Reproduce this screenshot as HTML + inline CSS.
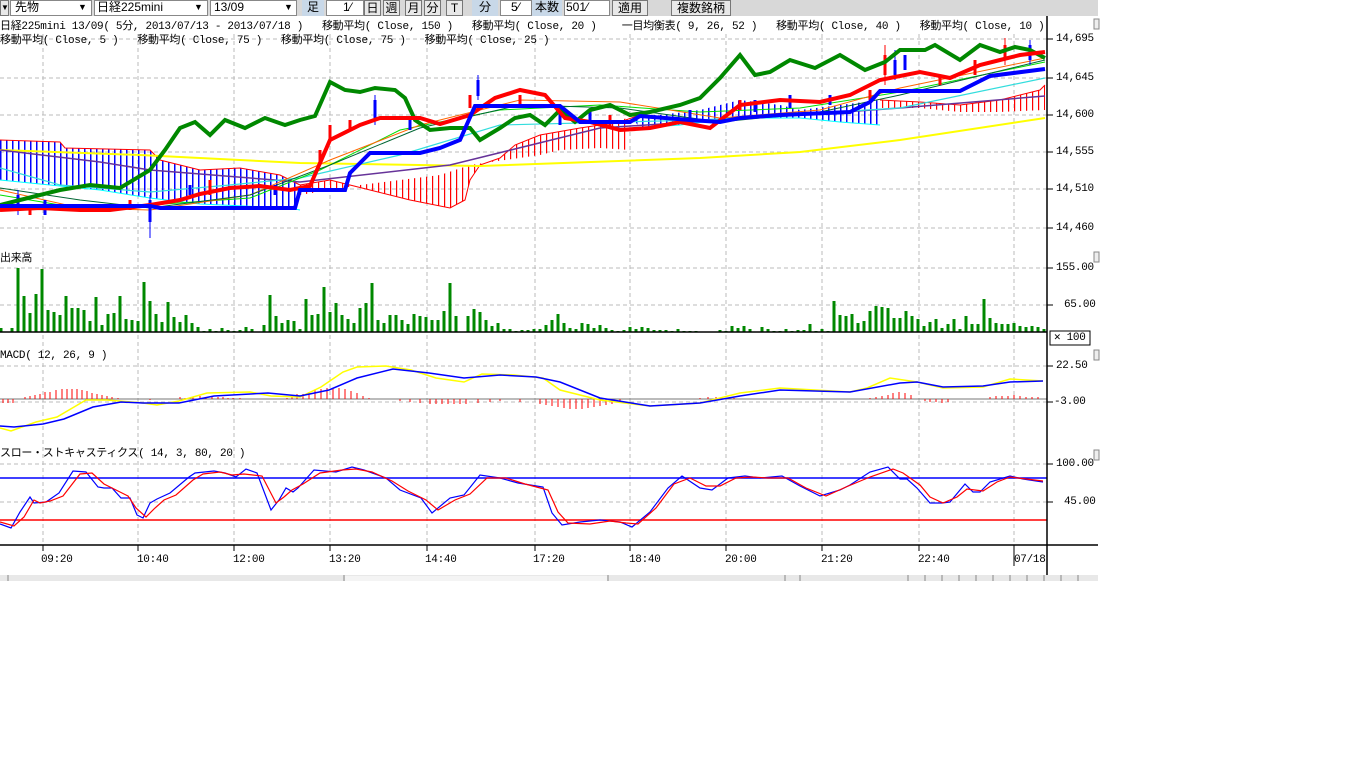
<!DOCTYPE html>
<html><head><meta charset="utf-8">
<style>
html,body{margin:0;padding:0;background:#fff;width:1366px;height:768px;overflow:hidden}
body{position:relative;font-family:"Liberation Mono","Noto Sans CJK JP",monospace}
.tb{position:absolute;left:0;top:0;width:1098px;height:16px;background:#d8d8d8}
.t{position:absolute;font-size:12px;line-height:14px;color:#000;white-space:pre;font-family:"Liberation Sans","Noto Sans CJK JP",sans-serif}
.m{position:absolute;font-size:11px;line-height:12px;color:#000;white-space:pre;font-family:"Liberation Mono","Noto Sans CJK JP",monospace;letter-spacing:-0.3px}
.box{position:absolute;top:0;height:14px;background:#fff;border:1px solid #888}
.btn{position:absolute;top:0;height:14px;background:#e8e8e8;border:1px solid #777;font-size:12px;line-height:14px;text-align:center;font-family:"Liberation Sans","Noto Sans CJK JP",sans-serif}
.lbl{position:absolute;top:0;height:16px;background:#c8d8e8;font-size:12px;line-height:15px;text-align:center;font-family:"Liberation Sans","Noto Sans CJK JP",sans-serif}
</style></head><body>
<div class="tb"></div>
<div class="btn" style="left:0;width:7px;font-size:8px">▼</div>
<div class="box" style="left:10px;width:80px"></div><div class="t" style="left:15px;top:0">先物</div><div class="t" style="left:78px;top:0;font-size:9px">▼</div>
<div class="box" style="left:94px;width:112px"></div><div class="t" style="left:97px;top:0">日経225mini</div><div class="t" style="left:194px;top:0;font-size:9px">▼</div>
<div class="box" style="left:210px;width:85px"></div><div class="t" style="left:214px;top:0">13/09</div><div class="t" style="left:284px;top:0;font-size:9px">▼</div>
<div class="lbl" style="left:302px;width:22px">足</div>
<div class="box" style="left:326px;width:36px"></div><div class="t" style="left:343px;top:0">1⁄</div>
<div class="btn" style="left:364px;width:15px">日</div><div class="btn" style="left:383px;width:15px">週</div><div class="btn" style="left:405px;width:15px">月</div><div class="btn" style="left:424px;width:15px">分</div><div class="btn" style="left:446px;width:15px">T</div>
<div class="lbl" style="left:472px;width:26px">分</div>
<div class="box" style="left:500px;width:30px"></div><div class="t" style="left:511px;top:0">5⁄</div>
<div class="lbl" style="left:532px;width:30px">本数</div>
<div class="box" style="left:564px;width:44px"></div><div class="t" style="left:566px;top:0">501⁄</div>
<div class="btn" style="left:612px;width:34px">適用</div>
<div class="btn" style="left:671px;width:58px">複数銘柄</div>

<svg style="position:absolute;left:0;top:0" width="1366" height="768" viewBox="0 0 1366 768">
<defs>
<pattern id="hr" width="6" height="10" patternUnits="userSpaceOnUse"><rect x="0" y="0" width="1.2" height="10" fill="#f00"/></pattern>
<pattern id="hb" width="6" height="10" patternUnits="userSpaceOnUse"><rect x="0" y="0" width="1.5" height="10" fill="#00f"/></pattern>
</defs>
<!-- grid -->
<g stroke="#bbb" stroke-dasharray="4,3" stroke-width="1">
<path d="M43 34V545M138 34V545M234 34V545M330 34V545M427 34V545M535 34V545M630 34V545M726 34V545M822 34V545M919 34V545M1014 34V545"/>
<path d="M0 39H1047M0 78H1047M0 115H1047M0 152H1047M0 189H1047M0 228H1047M0 268H1047M0 305H1047M0 366H1047M0 402H1047M0 464H1047M0 502H1047"/>
</g>
<!-- clouds -->
<polygon points="0,140 60,142 65,148 150,150 160,160 200,170 240,168 280,175 300,185 300,210 290,208 200,204 150,198 100,190 50,185 0,180" fill="url(#hb)"/>
<polyline points="0,140 60,142 65,148 150,150 160,160 200,170 240,168 280,175 300,185" fill="none" stroke="#f00"/>
<polyline points="0,180 50,185 100,190 150,198 200,204 290,208 300,210" fill="none" stroke="#0ff"/>
<polygon points="300,185 330,180 370,190 410,200 450,208 465,200 470,180 480,165 500,158 515,145 540,135 580,128 620,122 630,115 630,150 600,148 560,150 540,155 505,160 470,165 440,175 400,180 360,185 330,190 300,195" fill="url(#hr)"/>
<polyline points="300,185 330,180 370,190 410,200 450,208 465,200 470,180 480,165 500,158 515,145 540,135 580,128 620,122 640,115" fill="none" stroke="#f00"/>
<polygon points="630,115 660,115 700,110 740,100 780,105 800,110 840,105 880,100 880,125 840,122 800,118 760,118 720,120 680,125 640,128" fill="url(#hb)"/>
<polyline points="640,128 680,125 720,120 760,118 800,118 840,122 880,125" fill="none" stroke="#0ff"/>
<polygon points="880,100 920,102 960,105 1000,100 1040,90 1045,85 1045,110 1000,112 960,112 920,108 880,108" fill="url(#hr)"/>
<polyline points="880,100 920,102 960,105 1000,100 1040,90 1045,85" fill="none" stroke="#f00"/>
<!-- MAs -->
<polyline points="0,150 140,155 300,163 480,166 700,158 800,152 900,140 1045,118" fill="none" stroke="#ff0" stroke-width="2"/>
<polyline points="0,150 100,162 150,170 300,182 450,165 600,128 800,115 900,108 1045,96" fill="none" stroke="#639" stroke-width="1.5"/>
<polyline points="0,168 60,185 150,192 230,185 300,178 400,155 500,125 700,120 900,108 1045,78" fill="none" stroke="#3dd" stroke-width="1.2"/>
<polyline points="0,195 60,205 150,205 250,198 320,170 400,130 500,110 600,105 700,112 800,108 900,92 1045,62" fill="none" stroke="#0d0" stroke-width="1"/>
<polyline points="0,190 80,208 150,210 250,195 330,160 420,125 520,100 620,102 720,118 820,110 900,88 1045,58" fill="none" stroke="#f60" stroke-width="1"/>
<polyline points="0,188 80,200 150,208 250,195 330,165 420,128 520,105 620,108 720,122 820,112 900,95 1045,60" fill="none" stroke="#063" stroke-width="1"/>
<!-- candles -->
<g stroke="#00f" stroke-width="3"><path d="M18 195V210M45 200V215M150 200V222M190 185V195M275 185V195M375 100V118M410 118V130M478 80V96M560 110V125M590 110V122M690 110V122M755 100V112M790 95V108M830 95V105M895 60V75M905 55V70M1030 45V60"/></g>
<g stroke="#00f" stroke-width="1"><path d="M18 190V215M150 195V238M375 95V125M478 75V100M895 50V80M1030 40V65"/></g>
<g stroke="#f00" stroke-width="3"><path d="M30 205V215M130 200V210M210 180V195M320 150V165M330 125V140M350 120V130M470 95V108M520 95V105M610 115V128M740 100V110M870 90V100M885 55V75M940 75V85M975 60V75M1005 45V58"/></g>
<g stroke="#f00" stroke-width="1"><path d="M885 45V85M1005 38V65"/></g>
<!-- green -->
<polyline points="0,205 20,200 40,195 60,190 90,185 120,188 150,170 165,150 180,128 195,122 210,135 225,120 245,128 265,118 285,125 300,120 315,116 330,82 345,90 360,92 375,88 395,90 405,98 415,120 430,130 450,128 470,128 480,140 500,128 515,118 530,115 545,125 560,110 575,122 590,110 610,105 630,115 650,112 680,105 700,98 720,78 740,55 755,75 770,72 790,60 815,68 840,55 865,70 885,62 900,50 925,50 935,45 960,60 980,45 1000,52 1015,47 1030,50 1045,58" fill="none" stroke="#080" stroke-width="4"/>
<!-- red thick -->
<polyline points="0,210 40,208 80,210 110,210 150,205 180,200 200,194 230,188 260,186 290,190 310,186 330,140 360,125 380,118 420,118 440,124 470,115 495,98 520,90 545,95 565,118 590,122 620,130 650,128 680,122 710,128 740,105 780,100 820,102 850,95 880,80 920,72 950,78 980,65 1000,60 1020,55 1045,52" fill="none" stroke="#f00" stroke-width="4"/>
<!-- blue thick -->
<polyline points="0,206 150,206 160,208 295,208 300,190 345,190 350,173 370,153 420,153 440,148 460,140 475,106 560,106 580,122 630,122 640,116 690,120 720,122 740,118 780,115 850,112 870,102 880,91 960,91 990,76 1045,69" fill="none" stroke="#00f" stroke-width="4"/>

<!-- volume -->
<path stroke="#080" stroke-width="3" d="M1 332V328M12 332V328M18 332V268M24 332V296M30 332V313M36 332V294M42 332V269M48 332V310M54 332V312M60 332V315M66 332V296M72 332V308M78 332V308M84 332V310M90 332V321M96 332V297M102 332V325M108 332V314M114 332V313M120 332V296M126 332V319M132 332V320M138 332V321M144 332V282M150 332V301M156 332V314M162 332V322M168 332V302M174 332V317M180 332V322M186 332V315M192 332V323M198 332V327M204 332V331M210 332V329M216 332V331M222 332V328M228 332V330M234 332V331M240 332V330M246 332V327M252 332V329M264 332V325M270 332V295M276 332V316M282 332V323M288 332V320M294 332V321M300 332V329M306 332V299M312 332V315M318 332V314M324 332V287M330 332V312M336 332V303M342 332V315M348 332V319M354 332V323M360 332V308M366 332V303M372 332V283M378 332V320M384 332V323M390 332V315M396 332V315M402 332V320M408 332V324M414 332V314M420 332V316M426 332V317M432 332V320M438 332V320M444 332V311M450 332V283M456 332V316M468 332V316M474 332V309M480 332V312M486 332V320M492 332V326M498 332V323M504 332V329M510 332V329M516 332V331M522 332V330M528 332V330M534 332V329M540 332V329M546 332V325M552 332V320M558 332V314M564 332V323M570 332V328M576 332V329M582 332V323M588 332V324M594 332V328M600 332V325M606 332V328M612 332V330M618 332V331M624 332V330M630 332V327M636 332V329M642 332V327M648 332V328M654 332V330M660 332V330M666 332V330M672 332V331M678 332V329M684 332V331M690 332V331M696 332V331M720 332V330M726 332V331M732 332V326M738 332V328M744 332V326M750 332V329M762 332V327M768 332V329M774 332V331M780 332V331M786 332V329M792 332V331M798 332V330M804 332V330M810 332V324M816 332V331M822 332V329M828 332V331M834 332V301M840 332V315M846 332V316M852 332V314M858 332V323M864 332V321M870 332V311M876 332V306M882 332V307M888 332V308M894 332V318M900 332V318M906 332V311M912 332V316M918 332V319M924 332V326M930 332V322M936 332V319M942 332V328M948 332V324M954 332V319M960 332V329M966 332V316M972 332V324M978 332V324M984 332V299M990 332V318M996 332V323M1002 332V324M1008 332V324M1014 332V323M1020 332V326M1026 332V327M1032 332V326M1038 332V327M1044 332V329"/>
<path d="M0 332H1047" stroke="#000" stroke-width="1.5"/>

<!-- MACD -->
<path d="M0 399H1047" stroke="#777" stroke-width="1"/>
<path stroke="#f00" stroke-width="1" d="M3 399V403M8 399V403M13 399V403M25 399V397M30 399V396M35 399V395M40 399V394M45 399V392M50 399V392M56 399V390M62 399V389M67 399V389M72 399V389M77 399V389M82 399V390M87 399V391M92 399V393M97 399V394M102 399V395M107 399V396M112 399V397M118 399V398M150 399V400M180 399V397M185 399V398M193 399V397M200 399V396M206 399V397M212 399V397M218 399V397M223 399V397M228 399V398M233 399V398M240 399V398M287 399V398M292 399V396M297 399V394M303 399V394M309 399V392M315 399V390M321 399V389M327 399V388M333 399V388M339 399V388M345 399V389M351 399V391M357 399V393M363 399V396M369 399V398M400 399V401M410 399V402M420 399V403M430 399V404M436 399V404M442 399V404M448 399V404M454 399V404M460 399V404M466 399V404M478 399V403M490 399V402M500 399V401M520 399V402M540 399V404M546 399V405M552 399V406M558 399V407M564 399V408M570 399V409M576 399V409M582 399V409M588 399V408M594 399V407M600 399V406M606 399V405M612 399V404M620 399V403M700 399V398M708 399V397M716 399V397M722 399V397M728 399V398M734 399V398M870 399V398M876 399V397M882 399V396M888 399V395M893 399V393M899 399V392M905 399V393M911 399V395M925 399V401M930 399V402M936 399V402M942 399V403M948 399V402M990 399V397M996 399V396M1002 399V396M1008 399V396M1014 399V395M1020 399V396M1026 399V397M1032 399V397M1038 399V397"/>
<polyline points="0,428 11,431 36,422 57,417 86,400 107,400 143,403 157,405 179,401 207,393 250,392 271,396 300,397 321,387 343,372 357,367 386,366 411,370 436,378 464,382 482,374 514,375 543,378 560,390 600,400 650,406 700,403 740,393 780,388 850,392 867,388 890,378 917,382 943,388 983,387 1010,379 1043,381" fill="none" stroke="#ff0" stroke-width="1.5"/>
<polyline points="0,426 14,427 43,424 64,419 93,407 121,402 143,403 179,403 214,396 268,393 300,396 329,390 357,378 393,369 429,373 464,378 500,375 536,377 560,382 600,398 650,406 700,403 740,396 780,390 850,392 900,383 917,382 943,387 983,386 1010,382 1043,381" fill="none" stroke="#00f" stroke-width="1.5"/>

<!-- Stochastics -->
<path d="M0 478H1047" stroke="#00f" stroke-width="1.5"/>
<path d="M0 520H1047" stroke="#f00" stroke-width="1.5"/>
<polyline points="0,524 11,528 20,512 30,497 34,503 46,502 59,493 73,471 86,472 98,487 104,488 112,488 121,498 130,498 137,515 143,518 150,503 157,499 170,493 189,477 195,473 214,471 225,473 236,477 246,469 257,473 271,510 279,500 286,488 293,492 298,488 314,470 336,472 352,467 364,470 386,478 400,490 421,498 432,513 450,498 464,495 480,475 500,478 518,483 543,487 552,513 562,525 580,522 600,520 620,522 632,527 650,512 668,488 682,476 700,488 712,490 728,478 745,476 760,478 782,476 800,486 820,496 840,490 850,485 870,472 888,467 900,479 907,479 917,488 930,503 942,503 950,502 965,484 973,492 980,492 990,482 1010,476 1023,479 1043,482" fill="none" stroke="#00f" stroke-width="1.2"/>
<polyline points="0,522 14,526 24,517 34,500 40,503 50,501 63,496 80,474 92,473 104,484 116,490 128,496 136,508 146,517 155,508 164,500 176,495 193,480 203,474 220,472 232,475 244,474 262,476 276,503 284,497 292,490 303,484 320,473 342,470 356,469 372,472 392,481 408,491 426,500 438,510 455,500 470,494 487,478 506,478 525,484 548,490 558,512 568,523 590,524 610,521 626,523 638,524 656,508 674,484 690,478 706,486 720,486 736,478 752,477 768,478 788,478 806,488 826,496 846,487 870,477 893,469 903,473 920,485 930,497 943,503 957,497 967,489 983,491 997,482 1010,477 1043,481" fill="none" stroke="#f00" stroke-width="1.2"/>

<!-- axes -->
<path d="M1047 16V576M0 545H1098" stroke="#000" stroke-width="1.5"/>
<path stroke="#000" d="M1047 39H1053M1047 78H1053M1047 115H1053M1047 152H1053M1047 189H1053M1047 228H1053M1047 268H1053M1047 305H1053M1047 366H1053M1047 402H1053M1047 464H1053M1047 502H1053M43 545V551M138 545V551M234 545V551M330 545V551M427 545V551M535 545V551M630 545V551M726 545V551M822 545V551M919 545V551M1014 545V566"/>
<rect x="1050" y="331" width="40" height="14" fill="#fff" stroke="#000"/>
<g fill="#eee" stroke="#888"><rect x="1094" y="252" width="5" height="10"/><rect x="1094" y="350" width="5" height="10"/><rect x="1094" y="450" width="5" height="10"/><rect x="1094" y="19" width="5" height="10"/></g>
<!-- scrollbar -->
<rect x="0" y="575" width="1098" height="6" fill="#e8e8e8"/>
<path d="M8 575V581M344 575V581M608 575V581M785 575V581M800 575V581" stroke="#888"/>
<rect x="345" y="576" width="262" height="5" fill="#f4f4f4"/>
<path d="M908 575V581M925 575V581M942 575V581M959 575V581M976 575V581M993 575V581M1010 575V581M1027 575V581M1044 575V581M1061 575V581M1078 575V581" stroke="#888"/>
</svg>

<div class="m" style="left:0;top:21px">日経225mini 13/09( 5分, 2013/07/13 - 2013/07/18 )   移動平均( Close, 150 )   移動平均( Close, 20 )    一目均衡表( 9, 26, 52 )   移動平均( Close, 40 )   移動平均( Close, 10 )</div>
<div class="m" style="left:0;top:35px">移動平均( Close, 5 )   移動平均( Close, 75 )   移動平均( Close, 75 )   移動平均( Close, 25 )</div>
<div class="m" style="left:0;top:253px">出来高</div>
<div class="m" style="left:0;top:350px">MACD( 12, 26, 9 )</div>
<div class="m" style="left:0;top:448px">スロー・ストキャスティクス( 14, 3, 80, 20 )</div>
<div class="m" style="left:1056px;top:33px">14,695</div>
<div class="m" style="left:1056px;top:72px">14,645</div>
<div class="m" style="left:1056px;top:109px">14,600</div>
<div class="m" style="left:1056px;top:146px">14,555</div>
<div class="m" style="left:1056px;top:183px">14,510</div>
<div class="m" style="left:1056px;top:222px">14,460</div>
<div class="m" style="left:1056px;top:262px">155.00</div>
<div class="m" style="left:1064px;top:299px">65.00</div>
<div class="m" style="left:1054px;top:332px">✕ 100</div>
<div class="m" style="left:1056px;top:360px">22.50</div>
<div class="m" style="left:1054px;top:396px">-3.00</div>
<div class="m" style="left:1056px;top:458px">100.00</div>
<div class="m" style="left:1064px;top:496px">45.00</div>
<div class="m" style="left:41px;top:554px">09:20</div>
<div class="m" style="left:137px;top:554px">10:40</div>
<div class="m" style="left:233px;top:554px">12:00</div>
<div class="m" style="left:329px;top:554px">13:20</div>
<div class="m" style="left:425px;top:554px">14:40</div>
<div class="m" style="left:533px;top:554px">17:20</div>
<div class="m" style="left:629px;top:554px">18:40</div>
<div class="m" style="left:725px;top:554px">20:00</div>
<div class="m" style="left:821px;top:554px">21:20</div>
<div class="m" style="left:918px;top:554px">22:40</div>
<div class="m" style="left:1014px;top:554px">07/18</div>
</body></html>
